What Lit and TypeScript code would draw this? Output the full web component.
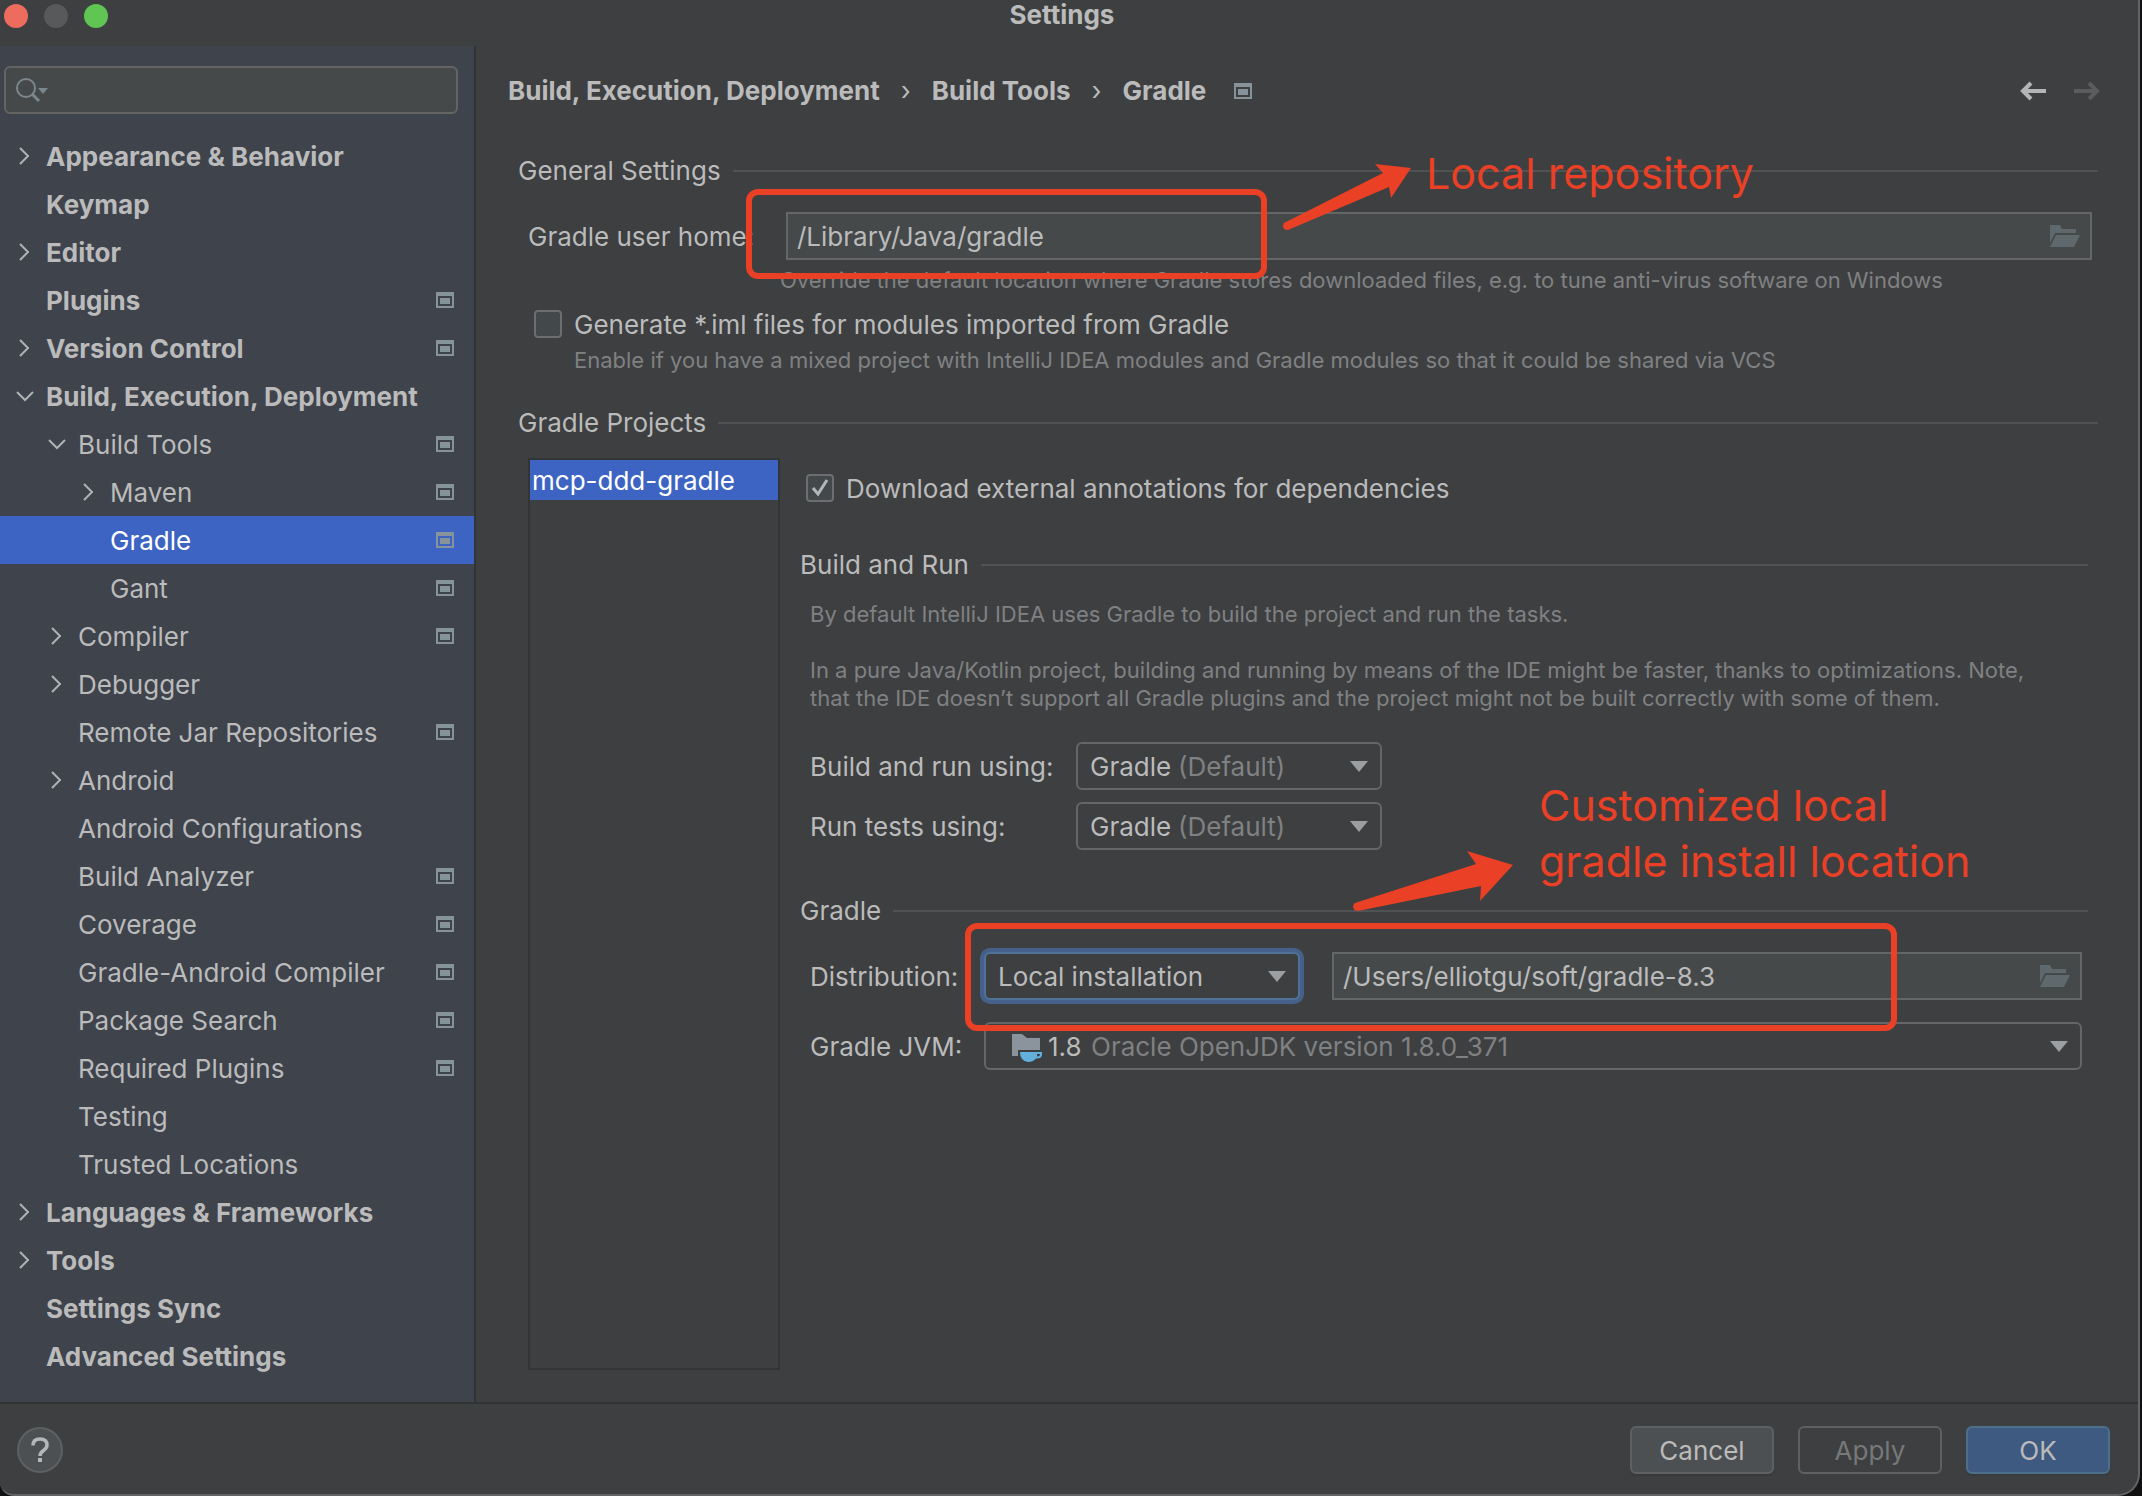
import { LitElement, html, css, svg, nothing } from "lit";
import { customElement } from "lit/decorators.js";
import { classMap } from "lit/directives/class-map.js";

interface TreeRow {
  label: string;
  level: number;
  arrow?: "open" | "closed";
  project?: boolean;
  selected?: boolean;
}

const TREE: TreeRow[] = [
  { label: "Appearance & Behavior", level: 0, arrow: "closed" },
  { label: "Keymap", level: 0 },
  { label: "Editor", level: 0, arrow: "closed" },
  { label: "Plugins", level: 0, project: true },
  { label: "Version Control", level: 0, arrow: "closed", project: true },
  { label: "Build, Execution, Deployment", level: 0, arrow: "open" },
  { label: "Build Tools", level: 1, arrow: "open", project: true },
  { label: "Maven", level: 2, arrow: "closed", project: true },
  { label: "Gradle", level: 2, project: true, selected: true },
  { label: "Gant", level: 2, project: true },
  { label: "Compiler", level: 1, arrow: "closed", project: true },
  { label: "Debugger", level: 1, arrow: "closed" },
  { label: "Remote Jar Repositories", level: 1, project: true },
  { label: "Android", level: 1, arrow: "closed" },
  { label: "Android Configurations", level: 1 },
  { label: "Build Analyzer", level: 1, project: true },
  { label: "Coverage", level: 1, project: true },
  { label: "Gradle-Android Compiler", level: 1, project: true },
  { label: "Package Search", level: 1, project: true },
  { label: "Required Plugins", level: 1, project: true },
  { label: "Testing", level: 1 },
  { label: "Trusted Locations", level: 1 },
  { label: "Languages & Frameworks", level: 0, arrow: "closed" },
  { label: "Tools", level: 0, arrow: "closed" },
  { label: "Settings Sync", level: 0 },
  { label: "Advanced Settings", level: 0 },
];

const projectIcon = html`<svg width="18" height="16" viewBox="0 0 18 16" aria-hidden="true">
  <path fill="#87939a" fill-rule="evenodd" d="M0 0h18v16H0zM2 4v10h14V4z" />
  <path fill="#87939a" d="M4 6h10v6H4z" />
</svg>`;

const folderIcon = html`<svg width="30" height="22" viewBox="0 0 30 22" aria-hidden="true">
  <path fill="#5f686d" d="M0 0h10l2 4h14v4H5L0 18z" />
  <path fill="#5f686d" d="M6 10h24l-6 12H0z" />
</svg>`;

const triangle = html`<svg class="tri" width="18" height="11" viewBox="0 0 18 11" aria-hidden="true">
  <path fill="#9c9fa2" d="M0 0h18l-9 11z" />
</svg>`;

const chevron = (kind?: "open" | "closed") => svg`<svg class="chev" width="18" height="18" viewBox="0 0 18 18" aria-hidden="true">
  ${kind === "closed" ? svg`<path d="M4 1l8 8-8 8" />` : nothing}
  ${kind === "open" ? svg`<path d="M1 5l8 8 8-8" />` : nothing}
</svg>`;

@customElement("app-root")
export class AppRoot extends LitElement {
  static styles = css`
    :host {
      display: block;
      background: #111;
      color: #bbbbbb;
      font: 26px/32px Inter, "Liberation Sans", sans-serif;
    }
    * { box-sizing: border-box; }
    button, input, select { font: inherit; color: inherit; margin: 0; outline: none; }
    svg { display: block; flex: none; }
    a { color: inherit; text-decoration: none; }
    .window {
      position: relative;
      display: flex;
      flex-direction: column;
      min-height: 100vh;
      margin-right: 2px;
      background: #3d3f41;
      border: 0 solid #646464;
      border-width: 0 2px 2px 0;
      border-radius: 0 0 22px 14px;
      overflow: hidden;
    }
    .titlebar {
      height: 46px;
      display: grid;
      grid-template-columns: 1fr auto 1fr;
      align-items: start;
      padding: 0 18px 0 4px;
    }
    .lights { display: flex; gap: 16px; padding-top: 4px; }
    .light { width: 24px; height: 24px; border: 0; border-radius: 50%; padding: 0; background: #58595b; }
    .light.close { background: #ed6b5f; }
    .light.zoom { background: #61c554; }
    .title { margin: 0; font-size: 26px; line-height: 30px; font-weight: 700; }
    .body { flex: 1; display: flex; }

    .sidebar { flex: 0 0 476px; min-width: 0; background: #3e434c; border-right: 2px solid #323334; padding: 20px 0 22px; }
    .search {
      display: flex;
      align-items: center;
      height: 48px;
      margin: 0 16px 18px 4px;
      border: 2px solid #646464;
      border-radius: 6px;
      background: #45494a;
      padding-left: 10px;
    }
    .search input { flex: 1; width: 0; min-width: 0; border: 0; background: none; height: 40px; }
    .tree { list-style: none; margin: 0; padding: 0; }
    .row {
      display: flex;
      align-items: center;
      width: 100%;
      height: 48px;
      border: 0;
      background: none;
      padding: 0 20px 0 16px;
      text-align: left;
    }
    .row.l0 { font-weight: 700; }
    .row.l1 { padding-left: 48px; }
    .row.l2 { padding-left: 80px; }
    .row.selected { background: #3d64c3; color: #fff; }
    .row .name { flex: 1; padding: 2px 0 0 12px; white-space: nowrap; }
    .chev path { fill: none; stroke: #b0b2b4; stroke-width: 2; }

    .main { flex: 1; min-width: 0; display: flex; flex-direction: column; padding: 0 40px 32px 32px; }
    .crumbs { display: flex; align-items: center; height: 90px; margin-right: -2px; font-weight: 700; white-space: nowrap; }
    .crumbs .sep { width: 52px; display: flex; justify-content: center; font-weight: 400; }
    .crumbs .mark { padding-left: 28px; }
    .history { margin-left: auto; display: flex; gap: 28px; }
    .history button { border: 0; background: none; padding: 0; }
    .head { display: flex; align-items: center; gap: 12px; margin: 0; font-size: 26px; font-weight: 400; height: 50px; white-space: nowrap; }
    .head::after { content: ""; flex: 1; height: 2px; background: #505254; }
    .page { flex: 1; display: flex; flex-direction: column; padding-left: 10px; }
    .page > .head.first { height: 70px; }
    .home { display: flex; align-items: center; margin: 6px 6px 0 10px; }
    .home label { flex: 0 0 258px; white-space: nowrap; }
    .home label, .line label { padding-top: 2px; }
    .field {
      flex: 1;
      min-width: 0;
      display: flex;
      align-items: center;
      height: 48px;
      border: 2px solid #646667;
      background: #45494a;
      padding-right: 10px;
    }
    .field input { flex: 1; min-width: 0; height: 44px; border: 0; background: none; padding: 0 0 0 9px; }
    .field button { border: 0; background: none; padding: 0; }
    .hint { margin: 0; color: #808182; font-size: 22px; line-height: 28px; }
    .hint.over { margin: 6px 0 16px 262px; }
    .hint.iml { margin: 8px 0 24px 56px; }
    .check { display: flex; align-items: center; gap: 12px; height: 28px; white-space: nowrap; }
    .check label { padding-top: 2px; }
    .check input {
      appearance: none;
      width: 28px;
      height: 28px;
      border: 2px solid #6b6d6e;
      border-radius: 4px;
      background: #43494a;
    }
    .check.iml { margin-left: 16px; }
    .tickbox { display: grid; }
    .tickbox > * { grid-area: 1 / 1; }
    .tickbox svg { pointer-events: none; }
    .split { flex: 1; display: flex; margin: 10px 0 0 10px; }
    .projects { flex: 0 0 252px; border: 2px solid #323435; margin: 0; padding: 0; list-style: none; }
    .projects li { background: #3d64c3; color: #fff; height: 40px; line-height: 42px; padding-left: 2px; white-space: nowrap; }
    .detail { flex: 1; min-width: 0; padding: 16px 10px 0 20px; }
    .detail .check { margin: 0 0 38px 6px; }
    .inner { padding: 0 6px 0 10px; }
    .inner .hint.a { margin: 10px 0 28px; }
    .inner .hint.b { margin-bottom: 30px; }
    .line { display: flex; align-items: center; height: 48px; }
    .line label { flex: 0 0 266px; white-space: nowrap; }
    .line.narrow label { flex-basis: 174px; }
    .line.second { margin: 12px 0 36px; }
    .line.dist { margin: 16px 0 22px; }
    .line .field { margin-left: 32px; }
    .combo { display: grid; flex: 0 0 306px; height: 48px; }
    .combo > * { grid-area: 1 / 1; }
    .combo select {
      appearance: none;
      width: 100%;
      height: 48px;
      border: 2px solid #646667;
      border-radius: 6px;
      background: #3d3f41;
      padding: 2px 12px 0;
    }
    .combo .over { display: flex; align-items: center; padding: 0 14px 0 102px; color: #808182; pointer-events: none; white-space: nowrap; }
    .combo .over span { padding-top: 2px; }
    .combo .tri { margin-left: auto; }
    .combo.local { flex-basis: 316px; }
    .combo.local select { border-color: #4f7199; box-shadow: 0 0 0 4px #45618a; }
    .combo.jvm { flex: 1; }
    .combo.jvm select { padding-left: 62px; }
    .combo.jvm .over { padding-left: 28px; }
    .combo.jvm .over span { padding-left: 49px; }

    .footer { display: flex; align-items: center; gap: 24px; height: 92px; border-top: 2px solid #323334; padding: 2px 28px 0 17px; }
    .footer button { width: 144px; height: 48px; border: 2px solid #5e6061; border-radius: 6px; background: #4c5052; padding: 2px 0 0; box-shadow: 0 2px 0 #37393b; }
    .footer button.help { width: 46px; height: 46px; border-radius: 50%; margin-right: auto; padding: 0; display: grid; place-items: center; box-shadow: none; }
    .footer button.apply { background: none; color: #777879; box-shadow: none; }
    .footer button.ok { background: #3f5a80; border-color: #4c708c; }

    .notes { position: absolute; inset: 0; pointer-events: none; color: #ea4025; font-size: 43px; line-height: 56px; }
    .box { position: absolute; border: 6px solid #ea4025; border-radius: 12px; }
    .box.one { left: 746px; top: 189px; width: 521px; height: 90px; }
    .box.two { left: 965px; top: 923px; width: 932px; height: 108px; }
    .note { position: absolute; margin: 0; white-space: nowrap; }
    .note.one { left: 1426px; top: 145px; }
    .note.two { left: 1539px; top: 777px; }
    .arrow { position: absolute; }
    .arrow.one { left: 1280px; top: 160px; }
    .arrow.two { left: 1350px; top: 848px; }
  `;

  private row(r: TreeRow) {
    return html`<li>
      <button class=${classMap({ row: true, ["l" + r.level]: true, selected: !!r.selected })}>
        ${chevron(r.arrow)}<span class="name">${r.label}</span>${r.project ? projectIcon : nothing}
      </button>
    </li>`;
  }

  private runner(id: string, label: string, extra = "") {
    return html`<div class="line ${extra}">
      <label for=${id}>${label}</label>
      <div class="combo">
        <select id=${id}><option>Gradle</option></select>
        <div class="over"><span>(Default)</span>${triangle}</div>
      </div>
    </div>`;
  }

  render() {
    return html`<div class="window">
      <header class="titlebar">
        <div class="lights">
          <button class="light close" aria-label="Close"></button>
          <button class="light" aria-label="Minimize"></button>
          <button class="light zoom" aria-label="Zoom"></button>
        </div>
        <h1 class="title">Settings</h1>
      </header>
      <div class="body">
        <nav class="sidebar">
          <div class="search">
            <svg width="34" height="26" viewBox="0 0 34 26" aria-hidden="true">
              <circle cx="10" cy="11" r="9" fill="none" stroke="#7b878d" stroke-width="2" />
              <path d="M16 17l7 7" stroke="#7b878d" stroke-width="3" />
              <path d="M22 11h10l-5 6z" fill="#7b878d" />
            </svg>
            <input type="search" aria-label="Search settings" />
          </div>
          <ul class="tree">${TREE.map((r) => this.row(r))}</ul>
        </nav>
        <main class="main">
          <div class="crumbs">
            <a href="#build">Build, Execution, Deployment</a><span class="sep">›</span>
            <a href="#tools">Build Tools</a><span class="sep">›</span>
            <a href="#gradle">Gradle</a><span class="mark">${projectIcon}</span>
            <div class="history">
              <button aria-label="Back">
                <svg width="26" height="20" viewBox="0 0 26 20"><path d="M26 10H3M11 2l-8 8 8 8" fill="none" stroke="#b4b5b6" stroke-width="4" /></svg>
              </button>
              <button aria-label="Forward" disabled>
                <svg width="26" height="20" viewBox="0 0 26 20"><path d="M0 10h23M15 2l8 8-8 8" fill="none" stroke="#5b5c5d" stroke-width="4" /></svg>
              </button>
            </div>
          </div>
          <div class="page">
            <h2 class="head first">General Settings</h2>
            <div class="home">
              <label for="home">Gradle user home:</label>
              <div class="field">
                <input id="home" type="text" value="/Library/Java/gradle" />
                <button aria-label="Browse for Gradle user home">${folderIcon}</button>
              </div>
            </div>
            <p class="hint over">Override the default location where Gradle stores downloaded files, e.g. to tune anti-virus software on Windows</p>
            <div class="check iml">
              <input id="iml" type="checkbox" />
              <label for="iml">Generate *.iml files for modules imported from Gradle</label>
            </div>
            <p class="hint iml">Enable if you have a mixed project with IntelliJ IDEA modules and Gradle modules so that it could be shared via VCS</p>
            <h2 class="head">Gradle Projects</h2>
            <div class="split">
              <ul class="projects"><li>mcp-ddd-gradle</li></ul>
              <div class="detail">
                <div class="check">
                  <span class="tickbox">
                    <input id="ann" type="checkbox" checked />
                    <svg width="28" height="28" viewBox="0 0 28 28" aria-hidden="true"><path d="M7 14l5 6L21 6" fill="none" stroke="#b4b6b7" stroke-width="3" /></svg>
                  </span>
                  <label for="ann">Download external annotations for dependencies</label>
                </div>
                <h3 class="head">Build and Run</h3>
                <div class="inner">
                  <p class="hint a">By default IntelliJ IDEA uses Gradle to build the project and run the tasks.</p>
                  <p class="hint b">In a pure Java/Kotlin project, building and running by means of the IDE might be faster, thanks to optimizations. Note,<br />that the IDE doesn’t support all Gradle plugins and the project might not be built correctly with some of them.</p>
                  ${this.runner("build", "Build and run using:")}
                  ${this.runner("tests", "Run tests using:", "second")}
                </div>
                <h3 class="head">Gradle</h3>
                <div class="inner">
                  <div class="line narrow dist">
                    <label for="dist">Distribution:</label>
                    <div class="combo local">
                      <select id="dist"><option>Local installation</option></select>
                      <div class="over">${triangle}</div>
                    </div>
                    <div class="field">
                      <input type="text" aria-label="Gradle installation path" value="/Users/elliotgu/soft/gradle-8.3" />
                      <button aria-label="Browse for Gradle installation">${folderIcon}</button>
                    </div>
                  </div>
                  <div class="line narrow">
                    <label for="jvm">Gradle JVM:</label>
                    <div class="combo jvm">
                      <select id="jvm"><option>1.8</option></select>
                      <div class="over">
                        <svg width="30" height="32" viewBox="0 0 30 32" aria-hidden="true">
                          <path fill="#8b939c" d="M0 4h10l5 4h13v12H6v6H0z" />
                          <path fill="#62b1dc" fill-rule="evenodd" d="M8 22h22q1 7-6 6.500Q21 32 16 32Q8 31 8 22zM25 24v2.500q3 0 3-2.500z" />
                        </svg>
                        <span>Oracle OpenJDK version 1.8.0_371</span>${triangle}
                      </div>
                    </div>
                  </div>
                </div>
              </div>
            </div>
          </div>
        </main>
      </div>
      <footer class="footer">
        <button class="help" aria-label="Help">
          <svg width="18" height="26" viewBox="0 0 18 26"><path d="M2 8.500Q2 2 9 2t7 6q0 3-3.500 5.500T9 19" fill="none" stroke="#b4b6b7" stroke-width="3.500" /><path d="M7 21h4v4H7z" fill="#b4b6b7" /></svg>
        </button>
        <button>Cancel</button>
        <button class="apply" disabled>Apply</button>
        <button class="ok">OK</button>
      </footer>
      <div class="notes">
        <div class="box one"></div>
        <div class="box two"></div>
        <svg class="arrow one" width="134" height="74" viewBox="0 0 134 74" aria-hidden="true">
          <path fill="#ea4025" d="M4 63L103 13L95 4L131 8L111 38L109 27L8 70Q3 70 3 66Q3 64 4 63z" />
        </svg>
        <svg class="arrow two" width="166" height="66" viewBox="0 0 166 66" aria-hidden="true">
          <path fill="#ea4025" d="M5 55L126 16L117 3L163 17L130 53L131 38L8 63Q4 63 3 59Q3 56 5 55z" />
        </svg>
        <p class="note one">Local repository</p>
        <p class="note two">Customized local<br />gradle install location</p>
      </div>
    </div>`;
  }
}
